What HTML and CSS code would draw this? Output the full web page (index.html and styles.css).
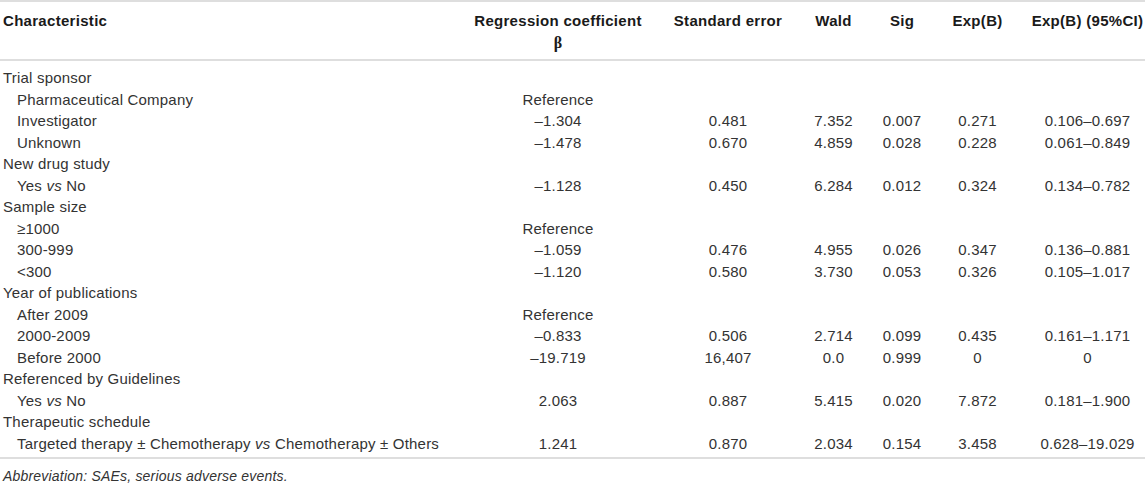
FILE: index.html
```html
<!DOCTYPE html>
<html>
<head>
<meta charset="utf-8">
<link rel="stylesheet" href="styles.css">
</head>
<body>
<table class="tbl">
  <colgroup>
    <col class="c1"><col class="c2"><col class="c3"><col class="c4"><col class="c5"><col class="c6"><col class="c7">
  </colgroup>
  <thead>
    <tr>
      <th class="first">Characteristic</th>
      <th>Regression coefficient<br><span class="beta">β</span></th>
      <th>Standard error</th>
      <th>Wald</th>
      <th>Sig</th>
      <th>Exp(B)</th>
      <th>Exp(B) (95%CI)</th>
    </tr>
  </thead>
  <tbody>
    <tr class="top"><td class="grp">Trial sponsor</td><td></td><td></td><td></td><td></td><td></td><td></td></tr>
    <tr><td class="sub">Pharmaceutical Company</td><td>Reference</td><td></td><td></td><td></td><td></td><td></td></tr>
    <tr><td class="sub">Investigator</td><td>–1.304</td><td>0.481</td><td>7.352</td><td>0.007</td><td>0.271</td><td>0.106–0.697</td></tr>
    <tr><td class="sub">Unknown</td><td>–1.478</td><td>0.670</td><td>4.859</td><td>0.028</td><td>0.228</td><td>0.061–0.849</td></tr>
    <tr><td class="grp">New drug study</td><td></td><td></td><td></td><td></td><td></td><td></td></tr>
    <tr><td class="sub">Yes <i>vs</i> No</td><td>–1.128</td><td>0.450</td><td>6.284</td><td>0.012</td><td>0.324</td><td>0.134–0.782</td></tr>
    <tr><td class="grp">Sample size</td><td></td><td></td><td></td><td></td><td></td><td></td></tr>
    <tr><td class="sub">≥1000</td><td>Reference</td><td></td><td></td><td></td><td></td><td></td></tr>
    <tr><td class="sub">300-999</td><td>–1.059</td><td>0.476</td><td>4.955</td><td>0.026</td><td>0.347</td><td>0.136–0.881</td></tr>
    <tr><td class="sub">&lt;300</td><td>–1.120</td><td>0.580</td><td>3.730</td><td>0.053</td><td>0.326</td><td>0.105–1.017</td></tr>
    <tr><td class="grp">Year of publications</td><td></td><td></td><td></td><td></td><td></td><td></td></tr>
    <tr><td class="sub">After 2009</td><td>Reference</td><td></td><td></td><td></td><td></td><td></td></tr>
    <tr><td class="sub">2000-2009</td><td>–0.833</td><td>0.506</td><td>2.714</td><td>0.099</td><td>0.435</td><td>0.161–1.171</td></tr>
    <tr><td class="sub">Before 2000</td><td>–19.719</td><td>16,407</td><td>0.0</td><td>0.999</td><td>0</td><td>0</td></tr>
    <tr><td class="grp">Referenced by Guidelines</td><td></td><td></td><td></td><td></td><td></td><td></td></tr>
    <tr><td class="sub">Yes <i>vs</i> No</td><td>2.063</td><td>0.887</td><td>5.415</td><td>0.020</td><td>7.872</td><td>0.181–1.900</td></tr>
    <tr><td class="grp">Therapeutic schedule</td><td></td><td></td><td></td><td></td><td></td><td></td></tr>
    <tr class="last"><td class="sub">Targeted therapy ± Chemotherapy <i>vs</i> Chemotherapy ± Others</td><td>1.241</td><td>0.870</td><td>2.034</td><td>0.154</td><td>3.458</td><td>0.628–19.029</td></tr>
  </tbody>
</table>
<p class="note">Abbreviation: SAEs, serious adverse events.</p>
</body>
</html>
```

FILE: styles.css
```css
html, body {
  margin: 0;
  padding: 0;
  background: #ffffff;
}
body {
  font-family: "Liberation Sans", Arial, sans-serif;
  font-size: 15px;
  color: #333333;
}
.tbl {
  width: 1145px;
  border-collapse: collapse;
  table-layout: fixed;
  border-top: 2px solid #dedede;
  border-bottom: 2px solid #dedede;
}
.c1 { width: 448px; }
.c2 { width: 220px; }
.c3 { width: 120px; }
.c4 { width: 91px; }
.c5 { width: 46px; }
.c6 { width: 105px; }
.c7 { width: 115px; }
.tbl th {
  font-weight: bold;
  color: #1a1a1a;
  letter-spacing: 0.3px;
  line-height: 22px;
  padding: 8px 0 5px 0;
  text-align: center;
  vertical-align: top;
  white-space: nowrap;
  border-bottom: 2px solid #dedede;
}
.tbl th.first {
  text-align: left;
  padding-left: 3px;
}
.beta {
  font-family: "Liberation Serif", "Times New Roman", serif;
  font-size: 16px;
}
.tbl td {
  padding: 0;
  line-height: 21.5px;
  letter-spacing: 0.2px;
  text-align: center;
  white-space: nowrap;
}
.tbl td.grp {
  text-align: left;
  padding-left: 3px;
}
.tbl td.sub {
  text-align: left;
  padding-left: 17px;
}
.tbl tr.top td {
  padding-top: 6px;
}
.tbl tr.last td {
  padding-bottom: 3px;
}
.note {
  margin: 8px 0 0 0;
  padding-left: 3px;
  font-style: italic;
  font-size: 14px;
  line-height: 18px;
  letter-spacing: 0.2px;
}
```
